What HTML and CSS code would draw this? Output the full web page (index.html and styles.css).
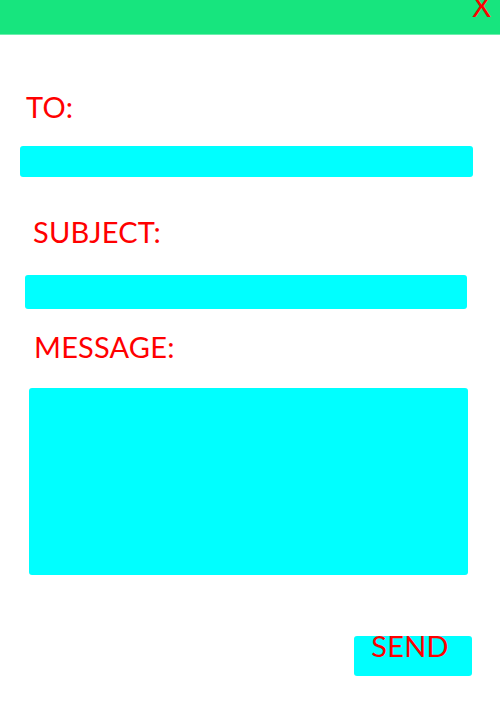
FILE: index.html
```html
<!DOCTYPE html>
<html>
<head>
<meta charset="utf-8">
<link rel="stylesheet" href="styles.css">
</head>
<body>
<div class="header"><span class="close">X</span></div>
<form class="form">
  <label class="label label-to">TO:</label>
  <input class="field field-to" type="text">
  <label class="label label-subject">SUBJECT:</label>
  <input class="field field-subject" type="text">
  <label class="label label-message">MESSAGE:</label>
  <textarea class="field field-message"></textarea>
  <div class="actions"><button class="send" type="button">SEND</button></div>
</form>
</body>
</html>
```
FILE: styles.css
```css
html, body {
  margin: 0;
  padding: 0;
  background: #ffffff;
  font-family: "Lato", "Open Sans", sans-serif;
  font-weight: 400;
  color: #ff0000;
}
.header {
  height: 34px;
  background: #17e57e;
  border-bottom: 1px solid #6cefad;
  display: flex;
  justify-content: flex-end;
  align-items: flex-start;
  overflow: hidden;
}
.close {
  font-size: 29px;
  line-height: 30px;
  margin-top: -9px;
  margin-right: 9px;
  color: #ff0000;
}
.form {
  display: flex;
  flex-direction: column;
  align-items: flex-start;
}
.label {
  display: block;
  font-size: 29px;
  line-height: 30px;
  letter-spacing: 0.2px;
  color: #ff0000;
}
.label-to { margin: 57px 0 0 26px; }
.label-subject { margin: 40px 0 0 33px; }
.label-message { margin: 23px 0 0 34px; }
.field {
  display: block;
  box-sizing: border-box;
  border: 0;
  padding: 0;
  background: #00ffff;
  border-radius: 3px;
  outline: none;
  resize: none;
  font: inherit;
}
.field-to { margin: 24px 0 0 20px; width: 453px; height: 31px; }
.field-subject { margin: 28px 0 0 25px; width: 442px; height: 34px; }
.field-message { margin: 26px 0 0 29px; width: 439px; height: 187px; }
.actions {
  align-self: stretch;
  display: flex;
  justify-content: flex-end;
  margin: 61px 28px 0 0;
}
.send {
  width: 118px;
  height: 40px;
  border: 0;
  border-radius: 3px;
  background: #00ffff;
  color: #ff0000;
  font-family: inherit;
  font-weight: 400;
  font-size: 29px;
  line-height: 20px;
  letter-spacing: 0.2px;
  padding: 0 6px 20px 0;
  display: flex;
  align-items: flex-start;
  justify-content: center;
}
```
